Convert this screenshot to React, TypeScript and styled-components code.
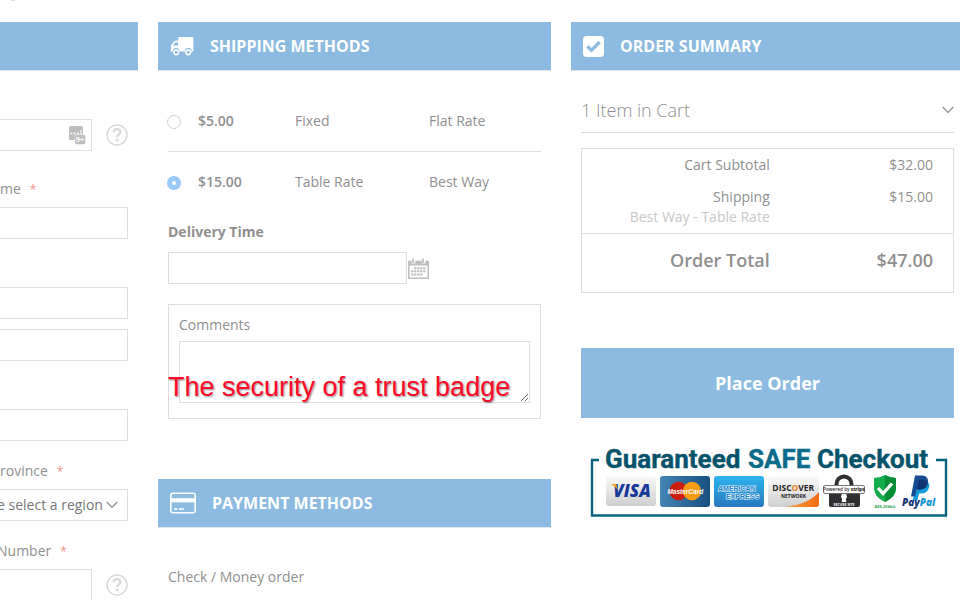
import React from "react";
import styled, { createGlobalStyle } from "styled-components";

const GlobalStyle = createGlobalStyle`
  *, *::before, *::after { box-sizing: border-box; }
  body {
    margin: 0;
    background: #fff;
    color: #8f8f8f;
    font: 14px/20px "Open Sans", sans-serif;
    overflow: hidden;
  }
  input, select, textarea, button { font: inherit; color: inherit; }
`;

const Page = styled.main`
  display: flex;
  flex-direction: column;
  height: 100vh;
  overflow: hidden;
`;

const TopStrip = styled.div`
  flex: none;
  height: 22px;
  padding-left: 11px;
`;

const TopMark = styled.div`
  width: 4px;
  height: 1px;
  background: #dedede;
`;

const Columns = styled.div`
  display: grid;
  grid-template-columns: 138fr 393fr 389fr;
  gap: 20px;
  align-items: start;
`;

const Column = styled.section`
  min-width: 0;
`;

const SectionHeader = styled.h2`
  display: flex;
  align-items: center;
  gap: 16px;
  height: 48px;
  margin: 0;
  padding-left: 12px;
  background: #8cbae0;
  box-shadow: 0 1px 0 #e4e6e8;
  color: #fff;
  font-size: 16px;
  font-weight: 700;
  line-height: 24px;
  text-transform: uppercase;

  svg { flex: none; }
`;

const AddressForm = styled.form`
  display: flex;
  flex-direction: column;
  gap: 20px;
  padding: 49px 10px 0 0;
`;

const Field = styled.div<{ $after?: number }>`
  display: flex;
  flex-direction: column;
  gap: 8px;
  margin-bottom: ${(p) => p.$after ?? 0}px;
`;

const FieldLabel = styled.label<{ $bleed?: boolean }>`
  display: block;
  height: 20px;
  margin-left: ${(p) => (p.$bleed ? -3 : 0)}px;
  white-space: nowrap;
`;

const Required = styled.span`
  margin-left: 9px;
  color: #ee8d8d;
  font-size: 12px;
`;

const FieldRow = styled.div`
  display: flex;
  align-items: center;
  gap: 14px;
`;

const TextInput = styled.input`
  display: block;
  flex: 1;
  width: 100%;
  min-width: 0;
  height: 32px;
  min-height: 32px;
  padding: 0 9px;
  border: 1px solid #dedede;
  border-radius: 0;
  background: #fff;
  outline: 0;
`;

const OpenInput = styled(TextInput)`
  border-left: 0;
`;

const InputGroup = styled.div`
  display: flex;
  flex-direction: column;
  gap: 10px;
`;

const InputWithBadge = styled.div`
  display: flex;
  flex: 1;
  align-items: center;
  min-width: 0;
  height: 32px;
  padding-right: 5px;
  border: 1px solid #dedede;
  border-left: 0;

  input { height: 30px; min-height: 30px; border: 0; }
  svg { flex: none; }
`;

const SelectBox = styled.div`
  display: flex;
  align-items: center;
  height: 32px;
  padding-right: 9px;
  border: 1px solid #dedede;
  border-left: 0;
  color: #777;

  svg { flex: none; }
`;

const Select = styled.select`
  flex: 1;
  min-width: 0;
  height: 30px;
  margin-left: -3px;
  padding: 0;
  border: 0;
  background: transparent;
  appearance: none;
  outline: 0;
`;

const HelpButton = styled.button`
  display: flex;
  flex: none;
  padding: 0;
  border: 0;
  background: none;
`;

const ColumnBody = styled.div`
  padding: 0 10px;
`;

const RatesTable = styled.table`
  width: 100%;
  margin-top: 21px;
  border-collapse: collapse;
  table-layout: fixed;

  td { height: 60px; padding: 0; }
  tr + tr td { height: 61px; border-top: 1px solid #dedede; }
  td:nth-child(1) { width: 30px; }
  td:nth-child(2) { width: 97px; font-weight: 600; }
  td:nth-child(3) { width: 134px; }
`;

const Radio = styled.input`
  display: block;
  width: 14px;
  height: 14px;
  margin: 2px 0 0 -1px;
  border: 1px solid #cfcfcf;
  border-radius: 50%;
  background: #fff;
  appearance: none;

  &:checked { border: 5px solid #99c8fa; }
`;

const DeliveryLabel = styled.label`
  display: block;
  margin-top: 10px;
  font-weight: 700;
`;

const DateRow = styled.div`
  display: flex;
  align-items: center;
  gap: 1px;
  margin-top: 10px;

  input { flex: 0 1 239px; }
`;

const CommentsBox = styled.div`
  position: relative;
  margin-top: 20px;
  padding: 10px 10px 15px;
  border: 1px solid #dedede;
`;

const CommentsLabel = styled.label`
  display: block;
`;

const Comments = styled.textarea`
  display: block;
  width: 100%;
  height: 62px;
  margin-top: 6px;
  padding: 8px;
  border: 1px solid #dedede;
  background: #fff;
  outline: 0;
  resize: vertical;
`;

const Caption = styled.p`
  position: absolute;
  top: 66px;
  left: -1px;
  margin: 0;
  color: #ff0a28;
  font: 27px/32px "Liberation Sans", Arial, sans-serif;
  text-shadow: 1px 1px 2px rgba(0, 0, 0, 0.45);
  white-space: nowrap;
  pointer-events: none;
`;

const PaymentSection = styled.div`
  margin-top: 60px;
`;

const PaymentOption = styled.p`
  margin: 40px 0 0;
`;

const SummaryBody = styled.div`
  padding: 20px 6px 0 10px;
`;

const CartToggle = styled.button`
  display: flex;
  align-items: center;
  justify-content: space-between;
  width: 100%;
  height: 43px;
  padding: 0 0 2px;
  border: 0;
  border-bottom: 1px solid #dedede;
  background: none;
  font-size: 18px;
  font-weight: 300;
`;

const Totals = styled.table`
  width: 100%;
  margin-top: 15px;
  border: 1px solid #dedede;
  border-collapse: separate;
  border-spacing: 0;
  table-layout: fixed;

  th, td {
    padding: 6px 20px 6px 0;
    font-weight: 400;
    text-align: right;
    vertical-align: top;
  }
  th { width: 56%; }
  tfoot th, tfoot td {
    height: 59px;
    padding-top: 16px;
    border-top: 1px solid #dedede;
    font-size: 18px;
    font-weight: 600;
  }
`;

const MethodNote = styled.span`
  display: block;
  color: #c8c8c8;
`;

const OrderButton = styled.button`
  display: block;
  width: 100%;
  height: 70px;
  margin-top: 55px;
  border: 0;
  background: #8cbae0;
  color: #fff;
  font-size: 18px;
  font-weight: 700;
`;

const TrustBadge = styled.svg`
  display: block;
  width: 358px;
  max-width: 100%;
  margin: 28px auto 0 9px;
`;

const Chevron = () => (
  <svg width="12" height="8" viewBox="0 0 12 8" fill="none" stroke="#8c8c8c" strokeWidth="1.2" aria-hidden="true">
    <path d="M.7 1 6 6.3 11.3 1" />
  </svg>
);

const Help = () => (
  <HelpButton type="button" aria-label="Help">
    <svg width="22" height="22" viewBox="0 0 22 22" fill="none" stroke="#dadada" aria-hidden="true">
      <circle cx="11" cy="11" r="10" strokeWidth="1.5" />
      <path d="M7.6 8.1C7.8 4.1 14.5 4.2 14.4 8c-.1 2.5-3.2 2.5-3.2 5.3" strokeWidth="2.3" />
      <circle cx="11.2" cy="16" r="1.5" fill="#dadada" stroke="none" />
    </svg>
  </HelpButton>
);

const PasswordIcon = () => (
  <svg width="17" height="19" viewBox="0 0 17 19" aria-hidden="true">
    <rect width="14" height="14" rx="1.6" fill="#bdbdbd" />
    <path d="M1.5 6.5h1.8v1.7H1.5zM4.7 6.5h1.8v1.7H4.7zM7.9 6.5h1.8v1.7H7.9zM11.5 4h1v4.5h-1z" fill="#fff" />
    <rect x="5.8" y="8.5" width="10.7" height="10" rx="2" fill="#bdbdbd" stroke="#fff" strokeWidth=".5" />
    <text x="11" y="16" fill="#fff" fontFamily="Open Sans" fontWeight="700" fontSize="7.5" textAnchor="middle">9+</text>
  </svg>
);

const TruckIcon = () => (
  <svg width="24" height="20" viewBox="0 0 24 20" aria-hidden="true">
    <path d="M8.300 2Q8.300 1 9.300 1H22.600Q23.400 1 23.400 1.800V14.200q0 1.200-1.200 1.200h-.6a3.300 3.300 0 0 0-6.600 0H9.500a3.300 3.300 0 0 0-6.600 0H1.100q-1.100 0-.8-1l.7-.5V9.600q0-.8.6-1.400l3-3q.7-.7 1.600-.7H8.300z" fill="#fff" />
    <path d="M3 9.600V8.900L5.700 6.200H8V9.600z" fill="#8cbae0" />
    <circle cx="6.200" cy="16.300" r="3.100" fill="#fff" />
    <circle cx="6.200" cy="16.300" r="1.500" fill="#8cbae0" />
    <circle cx="18.300" cy="16.300" r="3.100" fill="#fff" />
    <circle cx="18.300" cy="16.300" r="1.500" fill="#8cbae0" />
  </svg>
);

const CardIcon = () => (
  <svg width="26" height="22" viewBox="0 0 26 22" fill="none" stroke="#fff" aria-hidden="true">
    <rect x=".8" y="1.300" width="24.400" height="19.400" rx="2" strokeWidth="1.500" />
    <path d="M1 8.300h24" strokeWidth="4.200" />
    <path d="M4 17h3.500M9 17h5" strokeWidth="1.300" />
  </svg>
);

const CheckIcon = () => (
  <svg width="21" height="21" viewBox="0 0 21 21" aria-hidden="true">
    <rect width="21" height="21" rx="3.500" fill="#fff" />
    <path d="m4.300 10.300 4.200 4L16.700 6" fill="none" stroke="#8cbae0" strokeWidth="3.300" />
  </svg>
);

const CalendarIcon = () => (
  <svg width="21" height="21" viewBox="0 0 21 21" aria-hidden="true">
    <path d="M.8 3.500h19.400v16.700H.8z" fill="#fff" stroke="#bdbdbd" strokeWidth="1.500" />
    <path d="M0 3h21v4.500H0z" fill="#bdbdbd" />
    <path d="M5.500 1v4.500M15.500 1v4.500" stroke="#fff" strokeWidth="3.600" />
    <path d="M5 .5v4.500M15 .5v4.500" stroke="#bdbdbd" strokeWidth="1.700" />
    <path d="M6.200 10.200h12M3.200 13.300h15M3.200 16.500h12" stroke="#bdbdbd" strokeWidth="2" strokeDasharray="2.200 .8" />
  </svg>
);

const SafeCheckout = () => (
  <TrustBadge viewBox="0 0 358 72" role="img" aria-label="Guaranteed safe checkout">
    <defs>
      <linearGradient id="silver" x2="0" y2="1"><stop stopColor="#fafafa" /><stop offset="1" stopColor="#cfcfcf" /></linearGradient>
      <linearGradient id="navy"><stop stopColor="#4485b6" /><stop offset="1" stopColor="#175080" /></linearGradient>
      <linearGradient id="amex" x2="0" y2="1"><stop stopColor="#2bb4ee" /><stop offset="1" stopColor="#2878bd" /></linearGradient>
      <linearGradient id="orange"><stop stopColor="#f9a343" /><stop offset="1" stopColor="#f26a12" /></linearGradient>
    </defs>
    <path d="M9 14H2V69.500H356V14h-10" fill="none" stroke="#0b6280" strokeWidth="2.400" />
    <g fontFamily="Roboto, sans-serif" fontWeight="700" fontSize="26" strokeWidth=".4">
      <text x="15" y="22" fill="#07536b" stroke="#07536b">Guaranteed</text>
      <text x="158" y="22" fill="#0b6b8b" stroke="#0b6b8b">SAFE</text>
      <text x="227" y="22" fill="#07536b" stroke="#07536b">Checkout</text>
    </g>

    <rect x="16" y="30" width="50" height="30" rx="3" fill="url(#silver)" />
    <text x="42" y="51" fill="#16399b" fontFamily="Open Sans" fontWeight="800" fontStyle="italic" fontSize="17" textAnchor="middle">VISA</text>
    <path d="M20.500 38h5.800l1.500 6.500q-2-4.500-7.300-6.500z" fill="#f5a21b" />

    <rect x="70" y="30" width="50" height="31" rx="3" fill="url(#navy)" />
    <circle cx="88.500" cy="45" r="9.200" fill="#cc1d13" />
    <circle cx="102" cy="45" r="9.200" fill="#f79b16" />
    <text x="95.300" y="48" fill="#fff" fontFamily="Liberation Sans" fontWeight="700" fontStyle="italic" fontSize="6.500" textAnchor="middle">MasterCard</text>

    <rect x="124" y="30" width="50" height="31" rx="3" fill="url(#amex)" />
    <g fill="#2482c5" stroke="#e4f6ff" strokeWidth="1.100" paintOrder="stroke" fontFamily="Liberation Sans" fontWeight="700" fontSize="7">
      <text x="128" y="45">AMERICAN</text>
      <text x="136" y="53">EXPRESS</text>
    </g>

    <rect x="178" y="30" width="51" height="31" rx="3" fill="url(#silver)" />
    <path d="M229 46v12q0 3-3 3h-31q24-3 34-15z" fill="url(#orange)" />
    <g fill="#242424" fontFamily="Open Sans" fontWeight="700" textAnchor="middle">
      <text x="203.300" y="45" fontSize="8.500">DISC<tspan fill="#f58422">O</tspan>VER</text>
      <text x="203.500" y="52" fontSize="5">NETWORK</text>
    </g>

    <path d="M246.500 39v-1a7.500 7.500 0 0 1 15 0v4" fill="none" stroke="#303033" strokeWidth="4" />
    <rect x="239" y="40" width="31" height="21" rx="2" fill="#303033" />
    <circle cx="254" cy="50.300" r="2.900" fill="#fff" />
    <path d="m252.500 51-.8 5h4.600l-.8-5z" fill="#fff" />
    <rect x="233.500" y="39.500" width="41" height="8" rx="1.500" fill="#fff" stroke="#555" strokeWidth=".8" />
    <text x="254" y="45.300" fill="#303033" fontFamily="Open Sans" fontWeight="600" fontSize="4.700" textAnchor="middle">Powered by <tspan fontWeight="800">stripe</tspan></text>
    <text x="254" y="60" fill="#fff" fontFamily="Open Sans" fontWeight="700" fontSize="3.500" textAnchor="middle">SECURE SITE</text>

    <path d="M295 29q5 3 11 3v10q0 9-11 14-11-5-11-14V32q6 0 11-3z" fill="#12ad4b" />
    <path d="M295 29q5 3 11 3v10q0 9-11 14z" fill="#078d36" />
    <path d="m288 42 5 5.500 9-10" fill="none" stroke="#fff" strokeWidth="3.300" />
    <text x="295" y="61.500" fill="#24a34b" fontFamily="Open Sans" fontWeight="700" fontSize="4" textAnchor="middle">AES-256bit</text>

    <path d="M329.500 34h4q7 1 5.500 7.500-1.500 6-8 6h-2l-1.500 6.500h-5z" fill="#149bd7" />
    <path d="M325 29.500h7.500q6.500 1 5.500 7.500-1.500 6.500-8 6.500h-3.500L325 50.500h-4z" fill="#174b92" />
    <path d="M329 34h4.800q3 .5 4 3-1.500 6.500-7.800 6.500h-3z" fill="#103572" />
    <text x="312" y="60" fontFamily="Open Sans" fontWeight="800" fontStyle="italic" fontSize="10" fill="#153879">Pay<tspan fill="#1595d2">Pal</tspan></text>
  </TrustBadge>
);

const rates = [
  { id: "fixed", amount: "$5.00", method: "Fixed", carrier: "Flat Rate", selected: false },
  { id: "table", amount: "$15.00", method: "Table Rate", carrier: "Best Way", selected: true },
];

export default function App() {
  return (
    <>
      <GlobalStyle />
      <Page>
        <TopStrip><TopMark /></TopStrip>
        <Columns>
          <Column aria-label="Shipping address">
            <SectionHeader />
            <AddressForm>
              <Field $after={8}>
                <FieldRow>
                  <InputWithBadge>
                    <OpenInput type="email" aria-label="Email" />
                    <PasswordIcon />
                  </InputWithBadge>
                  <Help />
                </FieldRow>
              </Field>
              <Field>
                <FieldLabel htmlFor="name">me<Required>*</Required></FieldLabel>
                <OpenInput id="name" />
              </Field>
              <Field>
                <FieldLabel as="div" />
                <InputGroup>
                  <OpenInput aria-label="Address line 1" />
                  <OpenInput aria-label="Address line 2" />
                </InputGroup>
              </Field>
              <Field>
                <FieldLabel as="div" />
                <OpenInput aria-label="City" />
              </Field>
              <Field>
                <FieldLabel htmlFor="region">rovince<Required>*</Required></FieldLabel>
                <SelectBox>
                  <Select id="region"><option>e select a region</option></Select>
                  <Chevron />
                </SelectBox>
              </Field>
              <Field>
                <FieldLabel htmlFor="phone" $bleed>Number<Required>*</Required></FieldLabel>
                <FieldRow>
                  <OpenInput id="phone" type="tel" />
                  <Help />
                </FieldRow>
              </Field>
            </AddressForm>
          </Column>

          <Column>
            <SectionHeader><TruckIcon />Shipping Methods</SectionHeader>
            <ColumnBody>
              <RatesTable>
                <tbody>
                  {rates.map((rate) => (
                    <tr key={rate.id}>
                      <td><Radio type="radio" name="rate" id={rate.id} defaultChecked={rate.selected} /></td>
                      <td><label htmlFor={rate.id}>{rate.amount}</label></td>
                      <td>{rate.method}</td>
                      <td>{rate.carrier}</td>
                    </tr>
                  ))}
                </tbody>
              </RatesTable>
              <DeliveryLabel htmlFor="delivery">Delivery Time</DeliveryLabel>
              <DateRow>
                <TextInput id="delivery" />
                <HelpButton type="button" aria-label="Choose a date"><CalendarIcon /></HelpButton>
              </DateRow>
              <CommentsBox>
                <CommentsLabel htmlFor="comments">Comments</CommentsLabel>
                <Comments id="comments" />
                <Caption>The security of a trust badge</Caption>
              </CommentsBox>
            </ColumnBody>
            <PaymentSection>
              <SectionHeader><CardIcon />Payment Methods</SectionHeader>
              <ColumnBody><PaymentOption>Check / Money order</PaymentOption></ColumnBody>
            </PaymentSection>
          </Column>

          <Column>
            <SectionHeader><CheckIcon />Order Summary</SectionHeader>
            <SummaryBody>
              <CartToggle type="button"><span>1 Item in Cart</span><Chevron /></CartToggle>
              <Totals>
                <tbody>
                  <tr><th scope="row">Cart Subtotal</th><td>$32.00</td></tr>
                  <tr><th scope="row">Shipping<MethodNote>Best Way - Table Rate</MethodNote></th><td>$15.00</td></tr>
                </tbody>
                <tfoot>
                  <tr><th scope="row">Order Total</th><td>$47.00</td></tr>
                </tfoot>
              </Totals>
              <OrderButton type="button">Place Order</OrderButton>
              <SafeCheckout />
            </SummaryBody>
          </Column>
        </Columns>
      </Page>
    </>
  );
}
